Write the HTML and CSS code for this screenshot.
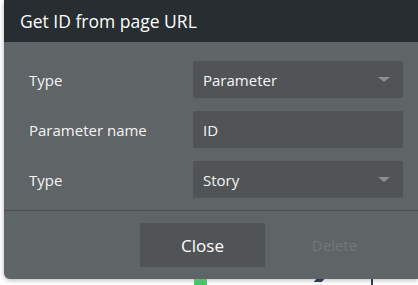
FILE: index.html
```html
<!DOCTYPE html>
<html lang="en">
<head>
  <meta charset="UTF-8" />
  <title>Get ID from page URL</title>
  <link rel="stylesheet" href="styles.css">
</head>
<body>
  <div class="dialog">
    <header class="dialog-head">Get ID from page URL</header>
    <div class="dialog-body">
      <label class="field-label">Type</label>
      <div class="field select">Parameter<span class="caret"></span></div>

      <label class="field-label">Parameter name</label>
      <div class="field">ID</div>

      <label class="field-label">Type</label>
      <div class="field select">Story<span class="caret"></span></div>
    </div>
    <footer class="dialog-foot">
      <button class="btn btn-close">Close</button>
      <button class="btn btn-delete" disabled>Delete</button>
    </footer>
  </div>
  <div class="behind">
    <span class="mark-green"></span>
    <span class="mark-slash"></span>
    <span class="mark-line"></span>
  </div>
</body>
</html>
```

FILE: styles.css
```css
body {
  margin: 0; background: #fff; font-family: "Open Sans", "Noto Sans", sans-serif;
  overflow: hidden; width: 418px; height: 285px;
}
.dialog {
  margin-left: 4px; background: #5f6467;
  border-radius: 0 0 0 6px; box-shadow: 0 1px 5px rgba(0,0,0,0.3);
  color: #f4f4f4;
}
.dialog-head {
  background: #272d30; height: 42px; display: flex; align-items: center;
  padding-left: 16px; font-size: 17.5px; color: #fff;
}
.dialog-body {
  display: grid; grid-template-columns: 164px 210px; row-gap: 13px;
  padding: 19px 0 12px 25px; border-bottom: 1px solid #4b4f52;
  align-items: center;
}
.field-label {
  font-size: 15px;
}
.field {
  height: 37px; background: #505457; border-radius: 2px;
  display: flex; align-items: center; padding: 0 13px 0 10px;
  font-size: 15px;
}
.select .caret {
  margin-left: auto; width: 0; height: 0;
  border-left: 6px solid transparent; border-right: 6px solid transparent;
  border-top: 5px solid #8b8f92;
}
.dialog-foot {
  display: flex; gap: 7px; padding: 12px 0 12px 136px;
}
.btn {
  width: 125px; height: 44px; border: none; border-radius: 1px;
  font-family: inherit; font-size: 17px; background: transparent; color: #fff;
}
.btn-close {
  background: #505457; cursor: pointer;
}
.btn-delete {
  color: #73787b; font-size: 15px;
}
.behind {
  position: relative; height: 6px;
}
.mark-green {
  position: absolute; left: 194px; top: 0; width: 13px; height: 6px; background: #4cc26a;
}
.mark-slash {
  position: absolute; left: 315px; top: 0; width: 8px; height: 3px;
  background: #2c3a55; transform: skewX(-40deg);
}
.mark-line {
  position: absolute; left: 371px; top: 0; width: 2px; height: 6px; background: #2c3a55;
}
```
